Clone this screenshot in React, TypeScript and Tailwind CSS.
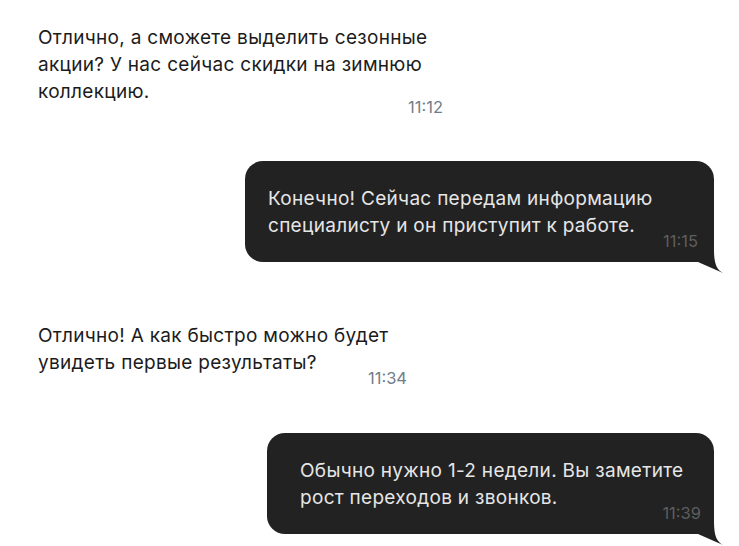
import React from "react";

type Msg = { id: number; out: boolean; lines: string[]; time: string };

const MESSAGES: Msg[] = [
  { id: 1, out: false, time: "11:12", lines: ["Отлично, а сможете выделить сезонные", "акции? У нас сейчас скидки на зимнюю", "коллекцию."] },
  { id: 2, out: true, time: "11:15", lines: ["Конечно! Сейчас передам информацию", "специалисту и он приступит к работе."] },
  { id: 3, out: false, time: "11:34", lines: ["Отлично! А как быстро можно будет", "увидеть первые результаты?"] },
  { id: 4, out: true, time: "11:39", lines: ["Обычно нужно 1-2 недели. Вы заметите", "рост переходов и звонков."] },
];

// per-message box tuning, taken from the mockup
const BOX: Record<number, string> = {
  1: "mt-[24px] ml-[38px] w-[405px]",
  2: "mt-[44px] ml-[245px] w-[469px] pl-[23px] pr-[16px]",
  3: "mt-[60px] ml-[38px] w-[369px]",
  4: "mt-[45px] ml-[267px] w-[447px] pl-[33px] pr-[13px]",
};

export default function App() {
  return (
    <div className="min-h-[546px] w-[739px] bg-white pb-4 font-['Inter',sans-serif]">
      <div className="flex flex-col">
        {MESSAGES.map((m) => (m.out ? <Outgoing key={m.id} m={m} /> : <Incoming key={m.id} m={m} />))}
      </div>
    </div>
  );
}

function Lines({ lines, color }: { lines: string[]; color: string }) {
  return (
    <div className={"text-[19px] leading-[27px] tracking-[0.3px] " + color}>
      {lines.map((l) => (
        <span key={l} className="block w-fit">{l}</span>
      ))}
    </div>
  );
}

function Incoming({ m }: { m: Msg }) {
  return (
    <div className={"flex flex-col " + BOX[m.id]}>
      <Lines lines={m.lines} color="text-[#1b1b1b]" />
      <span className="-mt-2 self-end text-[16.5px] leading-5 text-[#6f7d8a]">{m.time}</span>
    </div>
  );
}

function Outgoing({ m }: { m: Msg }) {
  return (
    <div className={"relative flex flex-col rounded-[18px] rounded-br-none bg-[#222222] pt-6 pb-[11px] " + BOX[m.id]}>
      <Lines lines={m.lines} color="text-[#e6e6e6]" />
      <span className="-mt-2 self-end text-[16.5px] leading-5 text-[#5e5e5e]">{m.time}</span>
      <svg className="absolute right-[-10px] bottom-[-12px]" width="26" height="24" viewBox="0 0 26 24">
        <path d="M0 12 L25 23 C19 20 16 14 16 0 L0 0 Z" fill="#222222" />
      </svg>
    </div>
  );
}
